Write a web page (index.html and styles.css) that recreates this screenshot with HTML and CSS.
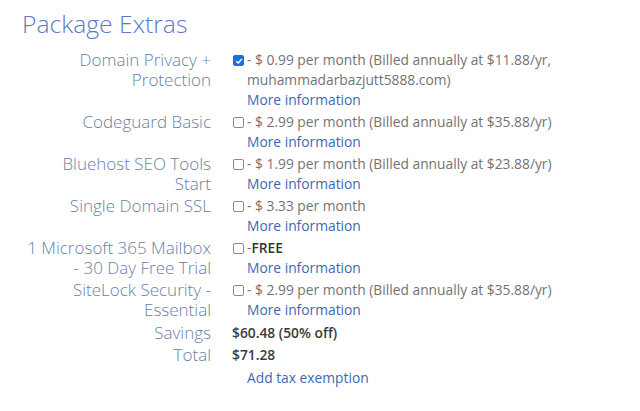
FILE: index.html
```html
<!DOCTYPE html>
<html lang="en">
<head>
<meta charset="utf-8">
<title>Package Extras</title>
<link rel="stylesheet" href="styles.css">
</head>
<body>
<div class="page">
  <h2 class="title">Package Extras</h2>
  <div class="extras">
    <div class="row">
      <div class="label">Domain Privacy +<br>Protection</div>
      <div class="value">
        <span class="box checked"><svg viewBox="0 0 10 10" width="8" height="8"><path d="M1.5 5.2 L4 7.6 L8.6 2.4" fill="none" stroke="#fff" stroke-width="1.8"/></svg></span>
        <div class="text">- $ 0.99 per month (Billed annually at $11.88/yr, muhammadarbazjutt5888.com)<br><a class="more" href="#">More information</a></div>
      </div>
    </div>
    <div class="row">
      <div class="label">Codeguard Basic</div>
      <div class="value">
        <span class="box"></span>
        <div class="text">- $ 2.99 per month (Billed annually at $35.88/yr)<br><a class="more" href="#">More information</a></div>
      </div>
    </div>
    <div class="row">
      <div class="label">Bluehost SEO Tools<br>Start</div>
      <div class="value">
        <span class="box"></span>
        <div class="text">- $ 1.99 per month (Billed annually at $23.88/yr)<br><a class="more" href="#">More information</a></div>
      </div>
    </div>
    <div class="row">
      <div class="label">Single Domain SSL</div>
      <div class="value">
        <span class="box"></span>
        <div class="text">- $ 3.33 per month<br><a class="more" href="#">More information</a></div>
      </div>
    </div>
    <div class="row">
      <div class="label">1 Microsoft 365 Mailbox<br>- 30 Day Free Trial</div>
      <div class="value">
        <span class="box"></span>
        <div class="text">-<strong class="free">FREE</strong><br><a class="more" href="#">More information</a></div>
      </div>
    </div>
    <div class="row">
      <div class="label">SiteLock Security -<br>Essential</div>
      <div class="value">
        <span class="box"></span>
        <div class="text">- $ 2.99 per month (Billed annually at $35.88/yr)<br><a class="more" href="#">More information</a></div>
      </div>
    </div>
    <div class="row summary">
      <div class="label">Savings</div>
      <div class="value"><strong class="amount">$60.48 (50% off)</strong></div>
    </div>
    <div class="row">
      <div class="label">Total</div>
      <div class="value"><strong class="amount">$71.28</strong></div>
    </div>
    <div class="row summary">
      <div class="label"></div>
      <div class="value"><a class="more tax" href="#">Add tax exemption</a></div>
    </div>
  </div>
</div>
</body>
</html>
```
FILE: styles.css
```css
html, body {
  margin: 0;
  padding: 0;
  background: #fff;
}
body {
  font-family: "Open Sans", "Liberation Sans", sans-serif;
}
.page {
  padding: 7px 0 0 22px;
}
.title {
  margin: 0 0 10px 0;
  font-size: 24.7px;
  line-height: 33px;
  font-weight: 300;
  color: #5a7bc3;
}
.extras {
  display: flex;
  flex-direction: column;
  gap: 2px;
}
.row {
  display: flex;
  align-items: flex-start;
  gap: 21px;
}
.row.summary {
  margin-top: 1px;
}
.label {
  width: 189px;
  flex: none;
  text-align: right;
  font-size: 17px;
  line-height: 20px;
  font-weight: 300;
  color: #6a7fa6;
  white-space: nowrap;
}
.value {
  display: flex;
  align-items: flex-start;
  font-size: 13.8px;
  line-height: 20px;
  color: #737373;
}
.box {
  flex: none;
  width: 9px;
  height: 9px;
  margin: 5px 3px 0 1px;
  border: 1px solid #8a8a8a;
  border-radius: 2px;
  display: flex;
  align-items: center;
  justify-content: center;
  background: #fff;
}
.box.checked {
  background: #1a6fe0;
  border-color: #1a6fe0;
}
.text {
  width: 320px;
}
.more {
  color: #4068b0;
  text-decoration: none;
}
.tax {
  margin-left: 15px;
}
.free {
  font-weight: 600;
  color: #333;
}
.amount {
  font-weight: 600;
  color: #3a3a3a;
}
```
